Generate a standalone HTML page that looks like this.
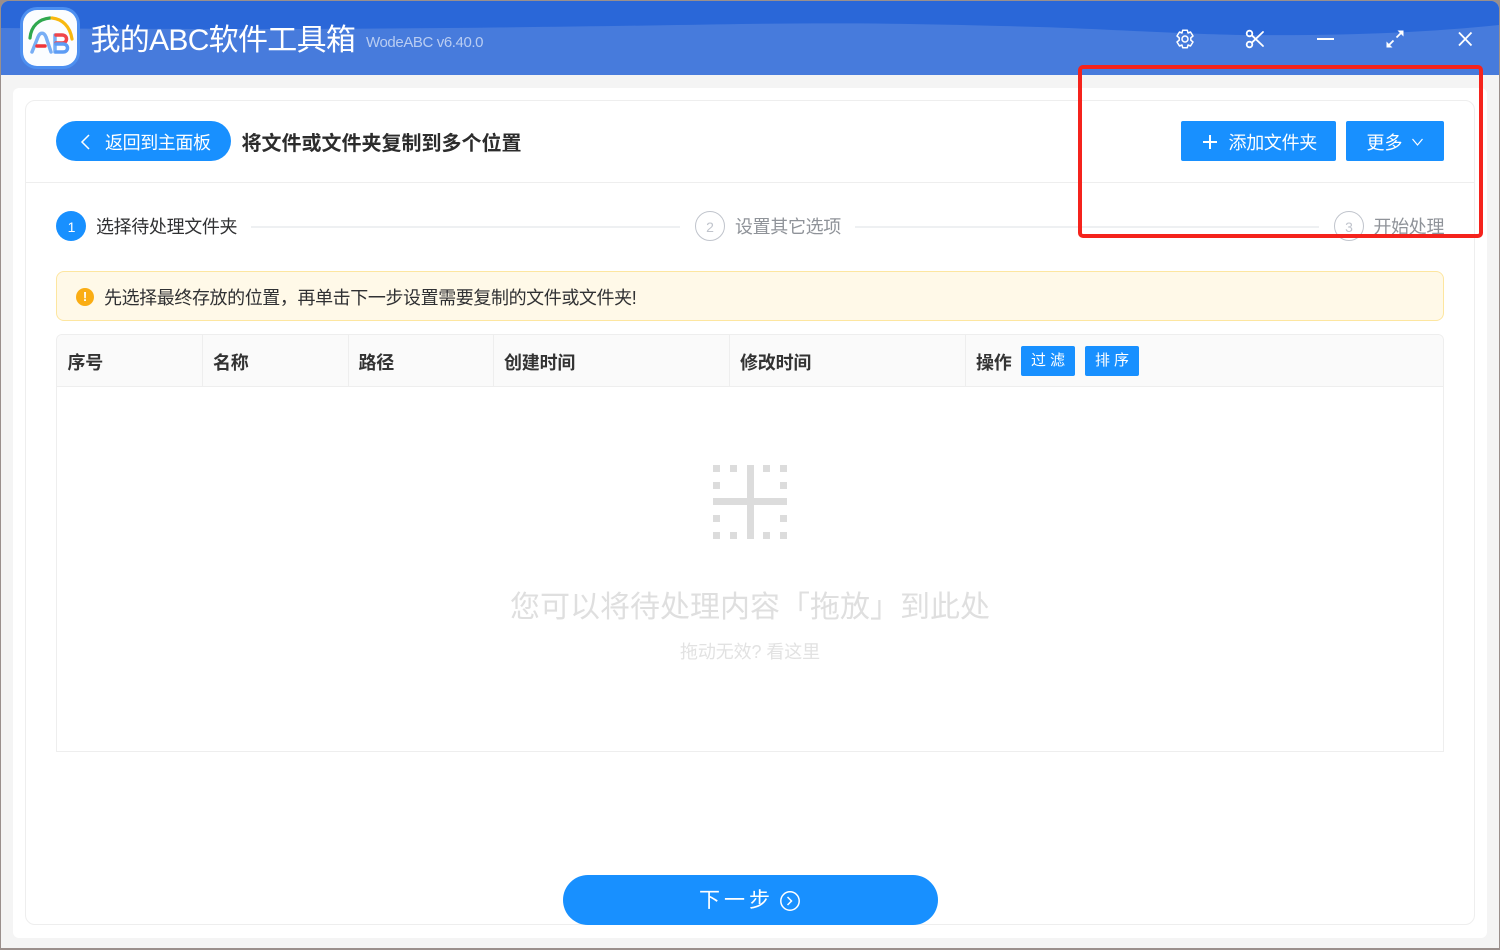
<!DOCTYPE html>
<html lang="zh-CN">
<head>
<meta charset="utf-8">
<title>我的ABC软件工具箱</title>
<style>
html,body{margin:0;padding:0}
body{width:1500px;height:950px;position:relative;overflow:hidden;background:#9a8f8c;font-family:"Liberation Sans","Noto Sans CJK SC",sans-serif;color:#303133}
div,span,svg{position:absolute;box-sizing:border-box}
.t{white-space:nowrap;line-height:1}
.th{top:354px;font-size:18px;font-weight:bold;color:#333;white-space:nowrap;line-height:18px;letter-spacing:-.2px}
.sep{top:335px;width:1px;height:51px;background:#eee}
.sq{background:#dcdcdc;width:7px;height:7px}
</style>
</head>
<body>
<div style="left:1px;top:1px;width:1498px;height:947px;background:#f4f4f4;border-radius:8px 8px 0 0;overflow:hidden">
  <div style="left:0;top:0;width:1498px;height:74px;background:#477bdc"></div>
  <svg style="left:0;top:0" width="1498" height="40" viewBox="0 0 1498 40"><path d="M0 0H1498V24C1420 32 1340 35 1240 34C1150 32 1100 27 1000 25C900 22 820 22 740 23C560 26 300 30 0 27Z" fill="#2a67d8"/></svg>
</div>

<!-- logo -->
<div style="left:20px;top:7px;width:60px;height:62px;border-radius:17px;background:#4d8ff0"></div>
<div style="left:23px;top:10px;width:54px;height:56px;border-radius:14px;background:#fbfdff"></div>
<svg style="left:23px;top:10px" width="54" height="56" viewBox="0 0 54 56" fill="none" stroke-linecap="round">
  <path d="M7 28C8 16 16 9 27 8" stroke="#2fa84f" stroke-width="3.200"/>
  <path d="M29 8C39 9 47 16 49 29" stroke="#f8b810" stroke-width="3.200"/>
  <path d="M9 42L15 27C17 22 21 22 23 27L28 42" stroke="#78aef5" stroke-width="3.500"/>
  <path d="M14 36H22" stroke="#f0353a" stroke-width="3.500"/>
  <path d="M32 25V42" stroke="#78aef5" stroke-width="3.500"/>
  <path d="M33 25H39C45 25 45 33 39 33H33" stroke="#f0454a" stroke-width="3.500"/>
  <path d="M33 34H40C46 34 46 42 40 42H33" stroke="#5c9cf5" stroke-width="3.500"/>
</svg>

<div class="t" style="left:90.500px;top:26px;font-size:30px;letter-spacing:-.7px;color:#fff">我的ABC软件工具箱</div>
<div class="t" style="left:366px;top:35px;font-size:15px;letter-spacing:-.4px;color:#b9cdf2">WodeABC v6.40.0</div>

<!-- window icons -->
<svg style="left:1174px;top:28px" width="22" height="22" viewBox="0 0 22 22" fill="none" stroke="#fff" stroke-width="1.500" stroke-linejoin="round"><path d="M8.700 2.200H13.300L14 5L16.500 4L19 8L16.800 9.800V12.200L19 14L16.500 18L14 17L13.300 19.800H8.700L8 17L5.500 18L3 14L5.200 12.200V9.800L3 8L5.500 4L8 5Z"/><circle cx="11" cy="11" r="3"/></svg>
<svg style="left:1244px;top:28px" width="22" height="22" viewBox="0 0 22 22" fill="none" stroke="#fff" stroke-width="1.800" stroke-linecap="round"><circle cx="5.500" cy="5.500" r="2.800"/><circle cx="5.500" cy="16.500" r="2.800"/><path d="M7.800 7.300L19 18M7.800 14.700L19 4"/></svg>
<div style="left:1317px;top:38px;width:17px;height:2px;background:#fff"></div>
<svg style="left:1385px;top:29px" width="20" height="20" viewBox="0 0 20 20" fill="none" stroke="#fff" stroke-width="1.800"><path d="M3 17L8.500 11.500M11.500 8.500L17 3"/><path d="M1.500 18.500V12.500L7.500 18.500ZM18.500 1.500V7.500L12.500 1.500Z" fill="#fff" stroke="none"/></svg>
<svg style="left:1456px;top:30px" width="18" height="18" viewBox="0 0 18 18" fill="none" stroke="#fff" stroke-width="1.800"><path d="M3 2.500L15.500 15.500M15.500 2.500L3 15.500"/></svg>

<!-- cards -->
<div style="left:13px;top:88px;width:1474px;height:850px;background:#fff;border-radius:6px"></div>
<div style="left:25px;top:100px;width:1450px;height:825px;background:#fff;border:1px solid #eee;border-radius:10px"></div>
<div style="left:26px;top:182px;width:1448px;height:1px;background:#eee"></div>

<!-- header -->
<div style="left:56px;top:121px;width:175px;height:40px;border-radius:20px;background:#1890ff"></div>
<svg style="left:79px;top:133px" width="14" height="18" viewBox="0 0 14 18" fill="none" stroke="#fff" stroke-width="1.500"><path d="M10 2L3 9L10 16"/></svg>
<div class="t" style="left:105px;top:134px;font-size:18px;color:#fff;letter-spacing:-.4px">返回到主面板</div>
<div class="t" style="left:241.500px;top:134px;font-size:20px;font-weight:bold;color:#2c2c2c">将文件或文件夹复制到多个位置</div>

<div style="left:1181px;top:121px;width:155px;height:40px;background:#1890ff;border-radius:2px"></div>
<svg style="left:1202px;top:134px" width="16" height="16" viewBox="0 0 16 16" stroke="#fff" stroke-width="2"><path d="M1 8H15M8 1V15"/></svg>
<div class="t" style="left:1228.500px;top:134px;font-size:18px;letter-spacing:-.3px;color:#fff">添加文件夹</div>
<div style="left:1346px;top:121px;width:98px;height:40px;background:#1890ff;border-radius:2px"></div>
<div class="t" style="left:1366.500px;top:134px;font-size:18px;color:#fff">更多</div>
<svg style="left:1411px;top:137px" width="13" height="10" viewBox="0 0 13 10" fill="none" stroke="#fff" stroke-width="1.200"><path d="M1.500 2L6.500 8L11.500 2"/></svg>

<!-- steps -->
<div style="left:56px;top:211px;width:30px;height:30px;border-radius:50%;background:#1890ff"></div>
<div class="t" style="left:56.500px;top:220px;width:30px;text-align:center;font-size:14px;color:#fff">1</div>
<div class="t" style="left:96px;top:218px;font-size:18px;color:#303133;letter-spacing:-.35px">选择待处理文件夹</div>
<div style="left:251px;top:226px;width:429px;height:2px;background:#eef0f2"></div>
<div style="left:695px;top:211px;width:30px;height:30px;border-radius:50%;border:1px solid #c0c4cc"></div>
<div class="t" style="left:695px;top:220px;width:30px;text-align:center;font-size:14px;color:#c0c4cc">2</div>
<div class="t" style="left:735px;top:218px;font-size:18px;color:#8f9399;letter-spacing:-.35px">设置其它选项</div>
<div style="left:855px;top:226px;width:464px;height:2px;background:#eef0f2"></div>
<div style="left:1334px;top:211px;width:30px;height:30px;border-radius:50%;border:1px solid #c0c4cc"></div>
<div class="t" style="left:1334px;top:220px;width:30px;text-align:center;font-size:14px;color:#c0c4cc">3</div>
<div class="t" style="left:1373.500px;top:218px;font-size:18px;color:#8f9399;letter-spacing:-.35px">开始处理</div>

<!-- notice -->
<div style="left:56px;top:271px;width:1388px;height:50px;background:#fff9e8;border:1px solid #fde6a0;border-radius:8px"></div>
<div style="left:76px;top:288px;width:18px;height:18px;border-radius:50%;background:#faad14"></div>
<div class="t" style="left:76px;top:290px;width:18px;text-align:center;font-size:13px;font-weight:bold;color:#fff">!</div>
<div class="t" style="left:104px;top:289px;font-size:18px;letter-spacing:-.41px;color:#303133">先选择最终存放的位置，再单击下一步设置需要复制的文件或文件夹!</div>

<!-- table -->
<div style="left:56px;top:334px;width:1388px;height:418px;border:1px solid #eee;border-radius:6px 6px 0 0;background:#fff"></div>
<div style="left:57px;top:335px;width:1386px;height:52px;background:#fafafa;border-bottom:1px solid #eee;border-radius:6px 6px 0 0"></div>
<div class="sep" style="left:202px"></div>
<div class="sep" style="left:348px"></div>
<div class="sep" style="left:493px"></div>
<div class="sep" style="left:729px"></div>
<div class="sep" style="left:965px"></div>
<div class="th" style="left:67.500px">序号</div>
<div class="th" style="left:213px">名称</div>
<div class="th" style="left:358.500px">路径</div>
<div class="th" style="left:504px">创建时间</div>
<div class="th" style="left:740px">修改时间</div>
<div class="th" style="left:976px">操作</div>
<div style="left:1021px;top:346px;width:54px;height:30px;background:#1890ff;border-radius:2px"></div>
<div class="t" style="left:1021px;top:353px;width:54px;text-align:center;font-size:15px;letter-spacing:4px;text-indent:4px;color:#fff">过滤</div>
<div style="left:1085px;top:346px;width:54px;height:30px;background:#1890ff;border-radius:2px"></div>
<div class="t" style="left:1085px;top:353px;width:54px;text-align:center;font-size:15px;letter-spacing:4px;text-indent:4px;color:#fff">排序</div>

<!-- empty icon -->
<div class="sq" style="left:713px;top:465px"></div>
<div class="sq" style="left:730px;top:465px"></div>
<div class="sq" style="left:763px;top:465px"></div>
<div class="sq" style="left:780px;top:465px"></div>
<div class="sq" style="left:713px;top:482px"></div>
<div class="sq" style="left:780px;top:482px"></div>
<div class="sq" style="left:713px;top:515px"></div>
<div class="sq" style="left:780px;top:515px"></div>
<div class="sq" style="left:713px;top:532px"></div>
<div class="sq" style="left:730px;top:532px"></div>
<div class="sq" style="left:763px;top:532px"></div>
<div class="sq" style="left:780px;top:532px"></div>
<div style="left:747px;top:465px;width:7px;height:74px;background:#dcdcdc"></div>
<div style="left:713px;top:498px;width:74px;height:7px;background:#dcdcdc"></div>

<div class="t" style="left:400px;top:593px;width:700px;text-align:center;font-size:30px;color:#dfdfdf">您可以将待处理内容「拖放」到此处</div>
<div class="t" style="left:600px;top:643px;width:300px;text-align:center;font-size:18px;letter-spacing:-.1px;color:#e2e2e2">拖动无效? 看这里</div>

<!-- next -->
<div style="left:563px;top:875px;width:375px;height:50px;border-radius:25px;background:#1890ff"></div>
<div class="t" style="left:699px;top:890px;font-size:21px;letter-spacing:4px;color:#fff">下一步</div>
<svg style="left:779px;top:890px" width="22" height="22" viewBox="0 0 22 22" fill="none" stroke="#fff" stroke-width="1.500"><circle cx="11" cy="11" r="9.200"/><path d="M8.500 7L12.500 11L8.500 15"/></svg>

<!-- red annotation -->
<div style="left:1078px;top:65px;width:405px;height:173px;border:4px solid #f5231c;border-radius:5px"></div>
</body>
</html>
